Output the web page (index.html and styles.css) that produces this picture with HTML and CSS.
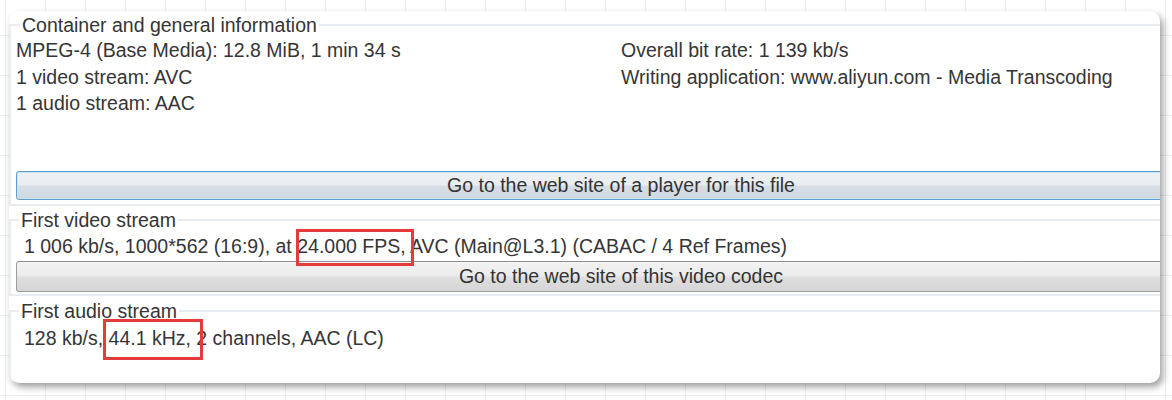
FILE: index.html
```html
<!DOCTYPE html>
<html lang="en">
<head>
<meta charset="utf-8">
<title>MediaInfo</title>
<link rel="stylesheet" href="styles.css">
</head>
<body>
<div class="card">
  <fieldset class="group group-general">
    <legend class="legend">Container and general information</legend>
    <div class="cols">
      <div class="col">
        <div class="line">MPEG-4 (Base Media): 12.8 MiB, 1 min 34 s</div>
        <div class="line">1 video stream: AVC</div>
        <div class="line">1 audio stream: AAC</div>
      </div>
      <div class="col">
        <div class="line">Overall bit rate: 1 139 kb/s</div>
        <div class="line">Writing application: www.aliyun.com - Media Transcoding</div>
      </div>
    </div>
    <div class="btn btn-blue">Go to the web site of a player for this file</div>
  </fieldset>
  <fieldset class="group group-video">
    <legend class="legend legend-sm">First video stream</legend>
    <div class="line line-in">1 006 kb/s, 1000*562 (16:9), at <span class="mark mark-video">24.000 FPS,</span> AVC (Main@L3.1) (CABAC / 4 Ref Frames)</div>
    <div class="btn btn-grey">Go to the web site of this video codec</div>
  </fieldset>
  <fieldset class="group group-audio">
    <legend class="legend legend-sm">First audio stream</legend>
    <div class="line line-in line-audio">128 kb/s, <span class="mark mark-audio">44.1 kHz,</span> 2 channels, AAC (LC)</div>
  </fieldset>
</div>
</body>
</html>
```
FILE: styles.css
```css
html, body {
  margin: 0;
  padding: 0;
}
body {
  width: 1172px;
  height: 400px;
  overflow: hidden;
  background-color: #ffffff;
  background-image:
    linear-gradient(to right, #ececec 1px, transparent 1px),
    linear-gradient(to bottom, #ececec 1px, transparent 1px);
  background-size: 40px 40px;
  background-position: 5px 35px;
  font-family: "Liberation Sans", Arial, sans-serif;
  font-size: 19.5px;
  color: #353535;
}
.card {
  margin: 11px 0 0 9px;
  width: 1151px;
  height: 372px;
  box-sizing: border-box;
  padding-top: 2.25px;
  background: #ffffff;
  border-radius: 10px;
  box-shadow: 3px 4px 7px rgba(0, 0, 0, 0.38);
  overflow: hidden;
  display: flex;
  flex-direction: column;
}
.group {
  margin: 0;
  padding: 0 0 0 5px;
  border: 2px solid #e9edf1;
  border-right: none;
  min-width: 0;
}
.legend {
  margin-left: 4px;
  padding: 0 2px;
  line-height: 24px;
}
.legend-sm {
  margin-left: 3px;
}
.line {
  line-height: 26.5px;
  white-space: nowrap;
}
.cols {
  display: grid;
  grid-template-columns: 605px 1fr;
}
.group-general {
  padding-bottom: 4px;
}
.group-video {
  margin-top: 2.5px;
  padding-bottom: 1.5px;
}
.group-audio {
  margin-top: 3.75px;
  border-bottom: none;
  flex: 1;
}
.line-in {
  padding-left: 8px;
  padding-top: 1px;
}
.line-audio {
  padding-top: 1.75px;
}
.btn {
  box-sizing: border-box;
  width: 1210px;
  text-align: center;
  color: #333;
  border-radius: 3px;
  white-space: nowrap;
}
.btn-blue {
  margin-top: 54px;
  height: 29px;
  line-height: 27px;
  border: 1px solid #5e9fcf;
  box-shadow: inset 0 0 0 1px #c9e3f3;
  background: linear-gradient(to bottom, #eef1f4 0%, #e9edf0 48%, #d6dee5 52%, #d0d9e0 100%);
}
.btn-grey {
  margin-top: 1.25px;
  height: 31px;
  line-height: 29px;
  border: 1px solid #9c9c9c;
  border-top-color: #8e8e8e;
  box-shadow: inset 0 1px 0 #f7f7f7;
  background: linear-gradient(to bottom, #f2f2f2 0%, #ececec 45%, #dedede 55%, #d5d5d5 100%);
}
.mark {
  position: relative;
}
.mark::after {
  content: "";
  position: absolute;
  border: 3px solid #e53b3b;
  pointer-events: none;
}
.mark-video::after {
  left: -1px;
  right: -8px;
  top: -6px;
  bottom: -9px;
}
.mark-audio::after {
  left: -6px;
  right: -12px;
  top: -8px;
  bottom: -11px;
}
```
